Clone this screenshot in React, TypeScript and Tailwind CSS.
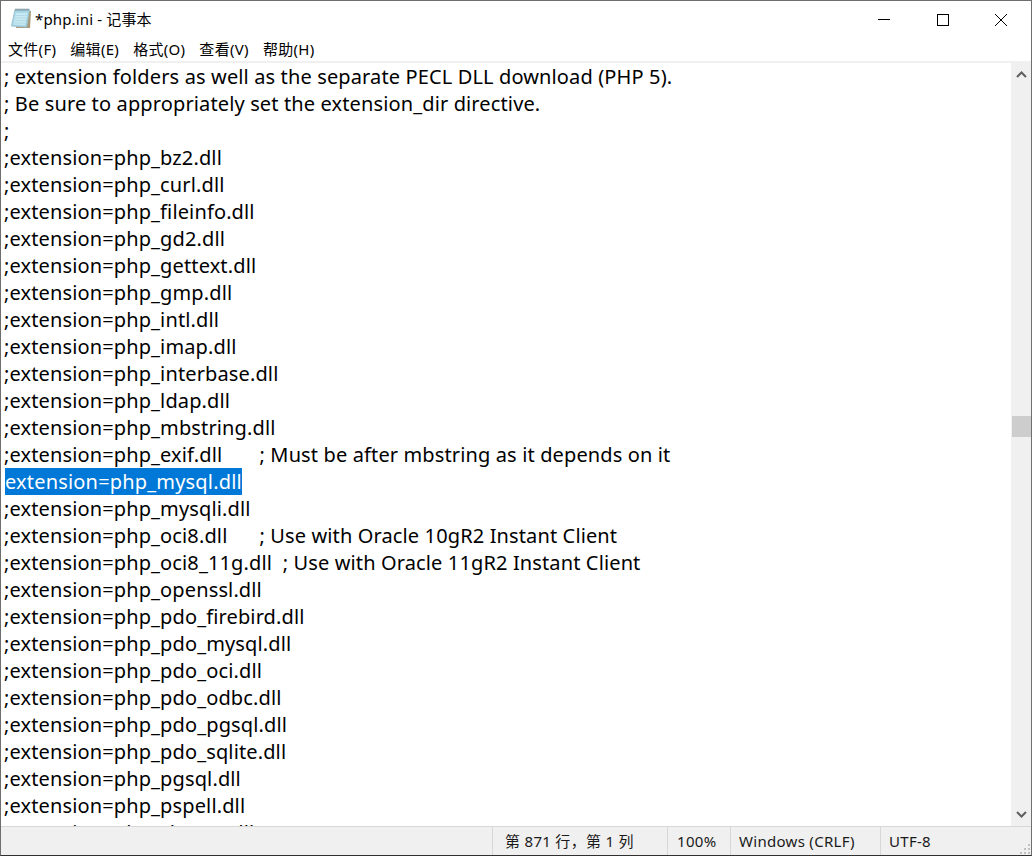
const lines: React.ReactNode[] = [
  '; extension folders as well as the separate PECL DLL download (PHP 5).',
  '; Be sure to appropriately set the extension_dir directive.',
  ';',
  ';extension=php_bz2.dll',
  ';extension=php_curl.dll',
  ';extension=php_fileinfo.dll',
  ';extension=php_gd2.dll',
  ';extension=php_gettext.dll',
  ';extension=php_gmp.dll',
  ';extension=php_intl.dll',
  ';extension=php_imap.dll',
  ';extension=php_interbase.dll',
  ';extension=php_ldap.dll',
  ';extension=php_mbstring.dll',
  ';extension=php_exif.dll       ; Must be after mbstring as it depends on it',
  <span className="inline-block h-[27px] ml-[1px] tracking-[0.18px] bg-[#0078d7] text-white">extension=php_mysql.dll</span>,
  ';extension=php_mysqli.dll',
  ';extension=php_oci8.dll      ; Use with Oracle 10gR2 Instant Client',
  ';extension=php_oci8_11g.dll  ; Use with Oracle 11gR2 Instant Client',
  ';extension=php_openssl.dll',
  ';extension=php_pdo_firebird.dll',
  ';extension=php_pdo_mysql.dll',
  ';extension=php_pdo_oci.dll',
  ';extension=php_pdo_odbc.dll',
  ';extension=php_pdo_pgsql.dll',
  ';extension=php_pdo_sqlite.dll',
  ';extension=php_pgsql.dll',
  ';extension=php_pspell.dll',
  ';extension=php_shmop.dll',
];

const menus = ['文件(F)', '编辑(E)', '格式(O)', '查看(V)', '帮助(H)'];

function NotepadIcon() {
  return (
    <svg width="22" height="22" viewBox="0 0 22 22">
      <path d="M6 3 L21 3 L20 20 L6 20 Z" fill="#a89a78" />
      <path d="M5 1.5 L19.5 1.5 L16.5 19 L1.5 18 Z" fill="#a9d8e8" stroke="#9cc4d2" strokeWidth="1" />
      <path d="M6 5 L17.5 5 L15 17 L3.5 16.5 Z" fill="#c9e8f1" />
      <path d="M5.5 7.5 H17 M5 10 H16.5 M4.5 12.5 H16 M4 15 H15.5" stroke="#b0dcea" strokeWidth="1" />
      <path d="M6 0.5 V3 M8 0.5 V3 M10 0.5 V3 M12 0.5 V3 M14 0.5 V3 M16 0.5 V3 M18 0.5 V3" stroke="#7e8c92" strokeWidth="1" />
    </svg>
  );
}

export default function App() {
  return (
    <div className="w-[1032px] h-[856px] flex flex-col bg-white border border-[#6e6e6e] border-b-[#303030] overflow-hidden font-['Noto_Sans','Noto_Sans_CJK_SC',sans-serif] text-black">
      {/* Title bar */}
      <div className="h-[37px] flex items-center shrink-0">
        <div className="ml-[9px] mr-[3px] mt-[-1px]"><NotepadIcon /></div>
        <span className="text-[15px] tracking-[0.15px]">*php.ini - 记事本</span>
        <div className="ml-auto mr-px flex items-center">
          <div className="w-[58px] flex justify-center">
            <div className="w-[12px] h-px bg-black" />
          </div>
          <div className="w-[59px] flex justify-center">
            <div className="w-[12px] h-[12px] border border-black" />
          </div>
          <div className="w-[58px] flex justify-center">
            <svg width="12" height="12" viewBox="0 0 12 12"><path d="M0 0 L12 12 M12 0 L0 12" stroke="#000" strokeWidth="1" /></svg>
          </div>
        </div>
      </div>
      {/* Menu bar */}
      <div className="h-[25px] flex items-center pl-[7px] gap-[14px] text-[15px] tracking-[0.3px] border-b-2 border-[#f0f0f0] shrink-0">
        {menus.map(m => <span key={m}>{m}</span>)}
      </div>
      {/* Editor */}
      <div className="flex-1 flex min-h-0">
        <div className="flex-1 overflow-hidden pl-[3px] text-[20px] tracking-[0.13px] leading-[27px] whitespace-pre">
          {lines.map((l, i) => <div key={i} className="h-[27px]">{l}</div>)}
        </div>
        <div className="w-[20px] bg-[#f0f0f0] flex flex-col items-center shrink-0">
          <svg width="11" height="7" viewBox="0 0 11 7" className="mt-[8px]"><path d="M1 6 L5.5 1.5 L10 6" fill="none" stroke="#606060" strokeWidth="2" /></svg>
          <div className="w-[19px] h-[21px] bg-[#cdcdcd] mt-[338px]" />
          <svg width="11" height="7" viewBox="0 0 11 7" className="mt-auto mb-[8px]"><path d="M1 1 L5.5 5.5 L10 1" fill="none" stroke="#606060" strokeWidth="2" /></svg>
        </div>
      </div>
      {/* Status bar */}
      <div className="h-[29px] flex bg-[#f0f0f0] border-t border-[#d7d7d7] text-[15px] tracking-[0.3px] text-[#1a1a1a] shrink-0 items-stretch relative">
        <div className="w-[491px]" />
        <div className="w-[175px] border-l border-[#d7d7d7] pl-[12px] flex items-center">第 871 行，第 1 列</div>
        <div className="w-[63px] border-l border-[#d7d7d7] pl-[9px] flex items-center">100%</div>
        <div className="w-[150px] border-l border-[#d7d7d7] pl-[8px] flex items-center">Windows (CRLF)</div>
        <div className="flex-1 border-l border-[#d7d7d7] pl-[8px] flex items-center">UTF-8</div>
        <svg width="12" height="12" viewBox="0 0 12 12" className="absolute right-0 bottom-0">
          <path d="M9 1h2v2H9z M5 5h2v2H5z M9 5h2v2H9z M1 9h2v2H1z M5 9h2v2H5z M9 9h2v2H9z" fill="#c0c0c0" />
        </svg>
      </div>
    </div>
  );
}
